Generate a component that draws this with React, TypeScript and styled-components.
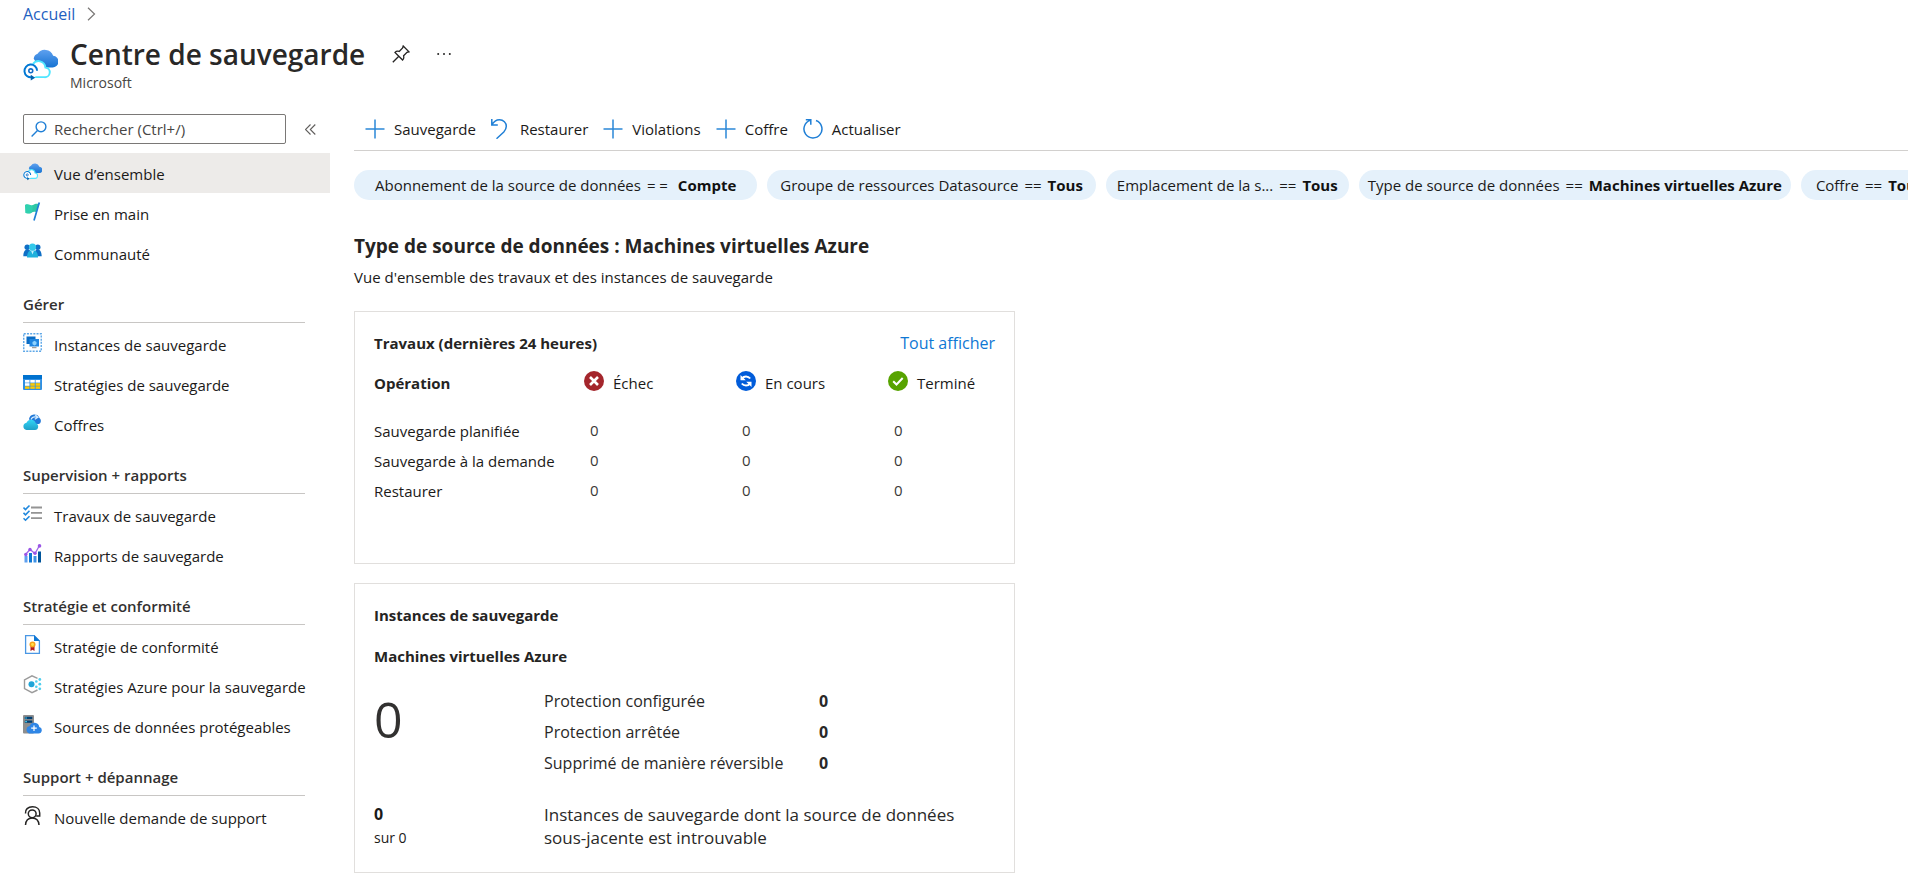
import React from 'react';
import styled, { createGlobalStyle } from 'styled-components';

const GlobalStyle = createGlobalStyle`
  *, *::before, *::after { box-sizing: border-box; }
  body {
    margin: 0;
    background: #fff;
    color: #1b1a19;
    font-family: "Segoe UI", "Open Sans", "Noto Sans", sans-serif;
    font-size: 15px;
    line-height: 20px;
  }
  h1, h2, h3, p, ul, dl, dd { margin: 0; padding: 0; }
  ul { list-style: none; }
  a { color: inherit; text-decoration: none; }
  button, input { font: inherit; color: inherit; }
  button { background: none; border: 0; padding: 0; cursor: pointer; }
  svg { display: block; flex: none; }
`;

/* ---------- Layout ---------- */

const Page = styled.div`
  min-width: 1040px;
  overflow-x: hidden;
`;

const Breadcrumb = styled.nav`
  display: flex;
  align-items: center;
  gap: 12px;
  height: 28px;
  padding-left: 23px;
  font-size: 16px;
  color: #1f5fbf;
`;

const Header = styled.header`
  display: flex;
  align-items: center;
  gap: 12px;
  height: 84px;
  padding: 0 23px 12px;
`;

const TitleRow = styled.div`
  display: flex;
  align-items: center;
  gap: 27px;
`;

const Title = styled.h1`
  font-size: 28px;
  font-weight: 600;
  line-height: 38px;
  color: #292827;
`;

const Subtitle = styled.p`
  font-size: 14px;
  color: #484644;
`;

const Body = styled.div`
  display: flex;
  align-items: flex-start;
`;

/* ---------- Sidebar ---------- */

const Sidebar = styled.aside`
  flex: none;
  width: 330px;
  padding-top: 2px;
`;

const SearchRow = styled.div`
  display: flex;
  align-items: center;
  gap: 19px;
  margin-bottom: 9px;
  padding-left: 23px;
`;

const SearchBox = styled.label`
  display: flex;
  align-items: center;
  gap: 7px;
  width: 263px;
  height: 30px;
  padding: 0 7px;
  border: 1px solid #7a7876;
  border-radius: 2px;
`;

const SearchInput = styled.input`
  flex: 1;
  min-width: 0;
  padding: 0;
  border: 0;
  outline: 0;
  background: none;
  &::placeholder { color: #484644; opacity: 1; }
`;

const NavLink = styled.a<{ $active?: boolean }>`
  display: flex;
  align-items: center;
  gap: 12px;
  height: 40px;
  padding: 2px 0 0 23px;
  white-space: nowrap;
  background: ${p => (p.$active ? '#edebe9' : 'transparent')};

  svg { margin-bottom: 6px; }
`;

const NavHeading = styled.h2`
  height: 43px;
  margin: 7px 25px 1px 23px;
  padding-top: 14px;
  border-bottom: 1px solid #c8c6c4;
  font-size: 15px;
  font-weight: 600;
  line-height: 20px;
  color: #323130;
`;

/* ---------- Main ---------- */

const Main = styled.main`
  flex: 1;
  min-width: 0;
  padding-left: 24px;
`;

const Toolbar = styled.div`
  display: flex;
  align-items: center;
  gap: 15px;
  height: 39px;
  padding: 0 11px 4px;
  border-bottom: 1px solid #d2d0ce;
`;

const ToolButton = styled.button`
  display: flex;
  align-items: center;
  gap: 9px;
  white-space: nowrap;
`;

const Chips = styled.div`
  display: flex;
  gap: 10px;
  padding-top: 19px;
  overflow: hidden;
`;

const Chip = styled.button<{ $pad: number }>`
  flex: none;
  height: 30px;
  padding: 0 ${p => p.$pad}px;
  border-radius: 15px;
  background: #e5f1fb;
  white-space: pre;

  strong { font-weight: 700; color: #111; }
`;

const Operator = styled.span`
  padding: 0 6px;
`;

const Heading = styled.h2`
  margin-top: 33px;
  font-size: 19px;
  font-weight: 700;
  line-height: 26px;
  color: #252423;
`;

const Lead = styled.p`
  margin-top: 8px;
`;

const Card = styled.section`
  max-width: 661px;
  margin-top: 19px;
  padding: 19px 19px 23px;
  border: 1px solid #e1dfdd;
`;

const JobsCard = styled(Card)`
  margin-top: 24px;
  padding-bottom: 57px;
`;

const CardHead = styled.div`
  display: flex;
  justify-content: space-between;
  align-items: center;
  line-height: 24px;
`;

const CardTitle = styled.h3`
  font-size: 15px;
  font-weight: 700;
  line-height: 24px;
  color: #252423;
`;

const CardLink = styled.a`
  font-size: 16px;
  color: #0f78d4;
`;

const JobsTable = styled.table`
  width: 100%;
  margin-top: 10px;
  border-collapse: collapse;
  table-layout: fixed;

  th, td {
    height: 30px;
    padding: 0;
    font-weight: 400;
    text-align: left;
    white-space: nowrap;
  }
  thead th { width: 152px; height: 51px; padding-bottom: 16px; }
  thead th:first-child { width: 210px; font-weight: 700; color: #252423; }
  thead th:last-child { width: auto; }
  td { padding: 0 0 3px 6px; color: #3b3a39; }
`;

const Status = styled.span`
  display: flex;
  align-items: center;
  gap: 9px;

  svg { margin-bottom: 3px; }
`;

const SubHeading = styled(CardTitle)`
  margin-top: 17px;
`;

const Split = styled.div<{ $gap: number }>`
  display: grid;
  grid-template-columns: 170px 1fr;
  margin-top: ${p => p.$gap}px;
  font-size: 16px;
  line-height: 23px;
`;

const BigNumber = styled.p`
  font-size: 50px;
  line-height: 66px;
  color: #323130;
`;

const Details = styled.dl`
  display: grid;
  grid-template-columns: 275px auto;
  justify-content: start;
  line-height: 31px;
  color: #292827;

  dd { font-weight: 700; }
`;

const Small = styled.p`
  font-size: 14px;
`;

const Note = styled.p`
  max-width: 420px;
  font-size: 17px;
  color: #292827;
`;

/* ---------- Icons ---------- */

const BackupCenterIcon = ({ size, id }: { size: number; id: string }) => (
  <svg width={size} height={size} viewBox="0 0 36 36" aria-hidden="true">
    <defs>
      <linearGradient id={id} x1="0" y1="0" x2="0" y2="1">
        <stop offset="0" stopColor="#5ea0ef" />
        <stop offset="1" stopColor="#1673d2" />
      </linearGradient>
    </defs>
    <path d="M11 12a6 6 0 0 1 4-5A9 9 0 0 1 31 9a6 6 0 0 1-1 12H17z" fill={`url(#${id})`} />
    <path d="M8 31h14a5 5 0 0 0 1-10 7 7 0 0 0-13-3 6.500 6.500 0 0 0-2 13z" fill="#fff" stroke="#50e6ff" strokeWidth="2" />
    <circle cx="8" cy="24.500" r="7.500" fill="#fff" />
    <path d="M9 31a6.500 6.500 0 1 1 5.500-6.500" fill="none" stroke="#0078d4" strokeWidth="2" />
    <circle cx="8" cy="24.500" r="2" fill="#fff" stroke="#0f6cc9" strokeWidth="1.600" />
    <path d="M8 28.500l4.500 3L8 34.500z" fill="#0062ad" />
  </svg>
);

const FlagIcon = () => (
  <svg width="19" height="19" viewBox="0 0 19 19" aria-hidden="true">
    <path d="M2 3c3-2 5 1.500 8 0 2-1 3-1.500 6-1l-3 8c-4-1-4 1.500-6.500 1.500S3 11 2.500 11z" fill="#2fc7a5" />
    <path d="M2 3c3-2 5 1.500 8 0l-1 7.500c-2 1-4.500 1-6.500.5z" fill="#31d6b4" opacity=".7" />
    <path d="M16.300.5L11 18.500" stroke="#1f7fd6" strokeWidth="1.700" />
  </svg>
);

const CommunityIcon = () => (
  <svg width="19" height="19" viewBox="0 0 19 19" aria-hidden="true">
    <g fill="#0f6fc6">
      <circle cx="4.200" cy="5.300" r="2.700" />
      <circle cx="14.800" cy="5.300" r="2.700" />
      <path d="M.3 14.300C.5 10 1.500 7.500 4.500 7.500s3 2 3 6.800zM11.500 14.300c0-4.800 1-6.800 3-6.800 3 0 4 2.500 4.200 6.800z" />
    </g>
    <path d="M4 15.500c0-5 2-7.500 5.500-7.500S15 10.500 15 15.500z" fill="#1fb0dc" />
    <path d="M8 8.500h3l-1.500 4z" fill="#c3f1ff" />
    <circle cx="9.500" cy="5" r="3.600" fill="#32c8ea" />
  </svg>
);

const InstancesIcon = () => (
  <svg width="19" height="19" viewBox="0 0 19 19" aria-hidden="true">
    <rect x=".75" y=".75" width="17.500" height="17.500" fill="#fff" stroke="#5ea8e8" strokeWidth="1.400" strokeDasharray="2 1.200" />
    <rect x="3.500" y="3.500" width="9" height="7.500" fill="#0a6cc4" />
    <rect x="6.500" y="6" width="9.500" height="7.500" fill="#2186e0" />
    <path d="M9.500 9l2-1.200 2 1.200v2.200l-2 1.200-2-1.200z" fill="#8fd3ff" />
    <path d="M9 14.700h4.500" stroke="#8a8886" />
  </svg>
);

const PoliciesIcon = () => (
  <svg width="19" height="19" viewBox="0 0 19 19" aria-hidden="true">
    <rect x="0" y="2" width="19" height="15" rx="1" fill="#2f8fe4" />
    <rect x="0" y="2" width="19" height="4" fill="#0072cf" />
    <g fill="#fff">
      <rect x="2" y="7" width="4.500" height="2.600" />
      <rect x="7.300" y="7" width="4.500" height="2.600" />
      <rect x="12.600" y="7" width="4.500" height="2.600" />
      <rect x="2" y="10.200" width="4.500" height="2.600" />
    </g>
    <g fill="#ffca00">
      <rect x="7.300" y="10.200" width="4.500" height="2.600" />
      <rect x="12.600" y="10.200" width="4.500" height="2.600" />
      <rect x="2" y="13.400" width="4.500" height="2.400" />
      <rect x="7.300" y="13.400" width="4.500" height="2.400" />
      <rect x="12.600" y="13.400" width="4.500" height="2.400" />
    </g>
  </svg>
);

const VaultsIcon = () => (
  <svg width="19" height="19" viewBox="0 0 19 19" aria-hidden="true">
    <defs>
      <linearGradient id="vault" x1="0" y1="0" x2="0" y2="1">
        <stop offset="0" stopColor="#32d4f5" />
        <stop offset="1" stopColor="#1fa0c8" />
      </linearGradient>
    </defs>
    <path d="M6 6a5.500 5.500 0 0 1 10.500-1A3.600 3.600 0 0 1 16 11H9z" fill="#2078d8" />
    <path d="M8 6.500c1-2.500 3.500-3 6-2.300m-2-2.400l3 2.500-3.200 2" fill="none" stroke="#d3ebff" strokeWidth="1.200" />
    <path d="M3.500 17h8.500a3.500 3.500 0 0 0 .8-6.800A5 5 0 0 0 3.500 9.700a3.700 3.700 0 0 0 0 7.300z" fill="url(#vault)" />
  </svg>
);

const JobsIcon = () => (
  <svg width="19" height="19" viewBox="0 0 19 19" fill="none" aria-hidden="true">
    <path d="M8 3.500h11M8 8.800h11M8 14.200h11" stroke="#949494" strokeWidth="1.800" />
    <path d="M.5 3.500l2 2L6.500 1.500M.5 8.800l2 2 4-4M.5 14.200l2 2 4-4" stroke="#2088dd" strokeWidth="1.600" />
  </svg>
);

const ReportsIcon = () => (
  <svg width="19" height="19" viewBox="0 0 19 19" aria-hidden="true">
    <rect x="1.500" y="12" width="3" height="6.500" fill="#5ea0ef" />
    <rect x="6" y="9" width="3" height="9.500" fill="#0f78d4" />
    <rect x="10.500" y="12" width="3" height="6.500" fill="#3c91e6" />
    <rect x="15" y="7.500" width="3" height="11" fill="#00559b" />
    <path d="M2.500 10.500L7 5.500l5 4 4.500-8" fill="none" stroke="#a067e8" strokeWidth="1.300" />
    <g fill="#9a55e6">
      <circle cx="2.800" cy="10.500" r="1.700" />
      <circle cx="7" cy="5.500" r="1.700" />
      <circle cx="12" cy="9.300" r="1.700" />
      <circle cx="16.500" cy="1.900" r="1.800" />
    </g>
  </svg>
);

const ComplianceIcon = () => (
  <svg width="19" height="19" viewBox="0 0 19 19" aria-hidden="true">
    <path d="M2.600.7h8.600l5.200 5.200v12.400H2.600z" fill="#fff" stroke="#4a97e4" strokeWidth="1.300" />
    <path d="M11 0l6 6h-6z" fill="#0f78d4" />
    <path d="M7.500 11h4v5l-2-1.200-2 1.200z" fill="#b3191f" />
    <circle cx="9.500" cy="9.500" r="3" fill="#f9a11b" />
    <circle cx="9.500" cy="9.500" r="1.400" fill="#ffe14d" />
  </svg>
);

const AzurePolicyIcon = () => (
  <svg width="19" height="19" viewBox="0 0 19 19" aria-hidden="true">
    <path d="M14.500 3.300L9 .9 1.500 5v8.500L9 17.600l5.500-2.600" fill="none" stroke="#9b9b9b" strokeWidth="1.400" />
    <circle cx="8.500" cy="9.200" r="3" fill="#1fa5d8" />
    <g fill="#50cfee">
      <circle cx="13.300" cy="6.500" r="1.300" />
      <circle cx="13.300" cy="11.800" r="1.300" />
      <circle cx="16.800" cy="4.500" r="1.400" />
      <circle cx="16.800" cy="9.200" r="1.400" />
      <circle cx="16.800" cy="13.800" r="1.400" />
    </g>
  </svg>
);

const DatasourcesIcon = () => (
  <svg width="19" height="19" viewBox="0 0 19 19" aria-hidden="true">
    <rect x="0" y="0" width="11" height="18.500" rx="1" fill="#8e8e8e" />
    <rect x="1.800" y="1.800" width="7.500" height="2.300" fill="#003f73" />
    <rect x="1.800" y="5.500" width="7.500" height="2.300" fill="#003f73" />
    <path d="M2.300 3h1.500M2.300 6.700h1.500" stroke="#50e6ff" strokeWidth="1.200" />
    <path d="M6 18.500h9.500a3.300 3.300 0 0 0 .8-6.500 5 5 0 0 0-9.600-1A3.900 3.900 0 0 0 6 18.500z" fill="#2f86e6" />
    <path d="M11 10.500v5.500M8.200 13.200h5.600" stroke="#fff" strokeWidth="1.200" />
  </svg>
);

const SupportIcon = () => (
  <svg width="19" height="19" viewBox="0 0 19 19" fill="none" stroke="#252423" strokeWidth="1.500" aria-hidden="true">
    <path d="M2.500 7.500C2 3.500 5 .8 9.500.8S16.700 3.500 16.700 7v3h-3.500" />
    <circle cx="9.200" cy="7.800" r="3.900" />
    <path d="M2.500 19c.3-4.500 3-7 6.700-7s6.500 2.500 6.800 7" />
  </svg>
);

const PinIcon = () => (
  <svg width="18" height="18" viewBox="0 0 18 18" fill="none" stroke="#252423" strokeWidth="1.300" aria-hidden="true">
    <path d="M11.200 1L17 6.800l-2 .6-3.400 3.400c.5 1.800.1 3.200-1 4.200L3 7.400c1-1.100 2.400-1.500 4.200-1L10.600 3zM6.800 11.200L.8 17.200" />
  </svg>
);

const MoreIcon = () => (
  <svg width="14" height="4" viewBox="0 0 14 4" fill="#252423" aria-hidden="true">
    <circle cx="1.200" cy="2" r="1" />
    <circle cx="7" cy="2" r="1" />
    <circle cx="12.800" cy="2" r="1" />
  </svg>
);

const ChevronIcon = () => (
  <svg width="9" height="14" viewBox="0 0 9 14" fill="none" stroke="#797775" strokeWidth="1.200" aria-hidden="true">
    <path d="M1 .8L7.500 7 1 13.200" />
  </svg>
);

const CollapseIcon = () => (
  <svg width="11" height="11" viewBox="0 0 11 11" fill="none" stroke="#605e5c" strokeWidth="1.100" aria-hidden="true">
    <path d="M5.500.5l-5 5 5 5M10.300.5l-5 5 5 5" />
  </svg>
);

const SearchIcon = () => (
  <svg width="16" height="16" viewBox="0 0 16 16" fill="none" stroke="#1f7fd6" strokeWidth="1.400" aria-hidden="true">
    <circle cx="10" cy="5.800" r="4.900" />
    <path d="M6.500 9.400L.6 15.400" />
  </svg>
);

const PlusIcon = () => (
  <svg width="20" height="20" viewBox="0 0 20 20" fill="none" stroke="#2b88d8" strokeWidth="1.500" aria-hidden="true">
    <path d="M10 .5v19M.5 10h19" />
  </svg>
);

const RestoreIcon = () => (
  <svg width="20" height="20" viewBox="0 0 20 20" fill="none" stroke="#1f7fd6" strokeWidth="1.500" aria-hidden="true">
    <path d="M.8 0v6h6M.8 6C3 2 6 .8 8.500.8c4 0 6.800 3 6.800 6.500 0 2.500-1 4-2.500 5.700L5.500 19.700" />
  </svg>
);

const RefreshIcon = () => (
  <svg width="20" height="20" viewBox="0 0 20 20" fill="none" stroke="#1f7fd6" strokeWidth="1.500" aria-hidden="true">
    <path d="M13 1.500a9 9 0 1 1-5.800-.1M2.800.8h5v5" />
  </svg>
);

const FailedIcon = () => (
  <svg width="20" height="20" viewBox="0 0 20 20" aria-hidden="true">
    <circle cx="10" cy="10" r="10" fill="#a4262c" />
    <path d="M6 6l8 8M14 6l-8 8" stroke="#fff" strokeWidth="2.600" />
  </svg>
);

const RunningIcon = () => (
  <svg width="20" height="20" viewBox="0 0 20 20" aria-hidden="true">
    <circle cx="10" cy="10" r="10" fill="#015cda" />
    <path d="M6 7.300C8 4.800 12 4.700 14.200 7.500M14 12.700c-2 2.500-6 2.600-8.200-.2" fill="none" stroke="#fff" strokeWidth="2" />
    <path d="M4.500 4v5.300h5.300zM15.500 16v-5.300h-5.300z" fill="#fff" />
  </svg>
);

const DoneIcon = () => (
  <svg width="20" height="20" viewBox="0 0 20 20" aria-hidden="true">
    <circle cx="10" cy="10" r="10" fill="#57a300" />
    <path d="M5.200 10.200l3.300 3.300 6.200-6.500" fill="none" stroke="#fff" strokeWidth="2" />
  </svg>
);

/* ---------- Data ---------- */

type NavItem = { label: string; icon: React.ReactNode; active?: boolean };
type NavGroup = { title?: string; items: NavItem[] };

const navGroups: NavGroup[] = [
  {
    items: [
      { label: 'Vue d’ensemble', icon: <BackupCenterIcon size={19} id="cloud-nav" />, active: true },
      { label: 'Prise en main', icon: <FlagIcon /> },
      { label: 'Communauté', icon: <CommunityIcon /> },
    ],
  },
  {
    title: 'Gérer',
    items: [
      { label: 'Instances de sauvegarde', icon: <InstancesIcon /> },
      { label: 'Stratégies de sauvegarde', icon: <PoliciesIcon /> },
      { label: 'Coffres', icon: <VaultsIcon /> },
    ],
  },
  {
    title: 'Supervision + rapports',
    items: [
      { label: 'Travaux de sauvegarde', icon: <JobsIcon /> },
      { label: 'Rapports de sauvegarde', icon: <ReportsIcon /> },
    ],
  },
  {
    title: 'Stratégie et conformité',
    items: [
      { label: 'Stratégie de conformité', icon: <ComplianceIcon /> },
      { label: 'Stratégies Azure pour la sauvegarde', icon: <AzurePolicyIcon /> },
      { label: 'Sources de données protégeables', icon: <DatasourcesIcon /> },
    ],
  },
  {
    title: 'Support + dépannage',
    items: [{ label: 'Nouvelle demande de support', icon: <SupportIcon /> }],
  },
];

const tools = [
  { label: 'Sauvegarde', icon: <PlusIcon /> },
  { label: 'Restaurer', icon: <RestoreIcon /> },
  { label: 'Violations', icon: <PlusIcon /> },
  { label: 'Coffre', icon: <PlusIcon /> },
  { label: 'Actualiser', icon: <RefreshIcon /> },
];

const filters = [
  { label: 'Abonnement de la source de données', op: '= = ', value: 'Compte', pad: 21 },
  { label: 'Groupe de ressources Datasource', op: '==', value: 'Tous', pad: 13 },
  { label: 'Emplacement de la s...', op: '==', value: 'Tous', pad: 11 },
  { label: 'Type de source de données', op: '==', value: 'Machines virtuelles Azure', pad: 9 },
  { label: 'Coffre', op: '==', value: 'Tous', pad: 15 },
];

const operations = ['Sauvegarde planifiée', 'Sauvegarde à la demande', 'Restaurer'];
const protection = ['Protection configurée', 'Protection arrêtée', 'Supprimé de manière réversible'];

/* ---------- App ---------- */

export default function App() {
  return (
    <Page>
      <GlobalStyle />
      <Breadcrumb aria-label="Fil d’Ariane">
        <a href="#accueil">Accueil</a>
        <ChevronIcon />
      </Breadcrumb>
      <Header>
        <BackupCenterIcon size={35} id="cloud-title" />
        <div>
          <TitleRow>
            <Title>Centre de sauvegarde</Title>
            <button type="button" aria-label="Épingler"><PinIcon /></button>
            <button type="button" aria-label="Plus"><MoreIcon /></button>
          </TitleRow>
          <Subtitle>Microsoft</Subtitle>
        </div>
      </Header>
      <Body>
        <Sidebar>
          <SearchRow>
            <SearchBox>
              <SearchIcon />
              <SearchInput type="text" aria-label="Rechercher" placeholder="Rechercher (Ctrl+/)" />
            </SearchBox>
            <button type="button" aria-label="Réduire le menu"><CollapseIcon /></button>
          </SearchRow>
          <nav>
            {navGroups.map((group, i) => (
              <div key={i}>
                {group.title && <NavHeading>{group.title}</NavHeading>}
                <ul>
                  {group.items.map(item => (
                    <li key={item.label}>
                      <NavLink href="#" $active={item.active}>
                        {item.icon}
                        {item.label}
                      </NavLink>
                    </li>
                  ))}
                </ul>
              </div>
            ))}
          </nav>
        </Sidebar>
        <Main>
          <Toolbar role="toolbar">
            {tools.map(tool => (
              <ToolButton key={tool.label} type="button">
                {tool.icon}
                {tool.label}
              </ToolButton>
            ))}
          </Toolbar>
          <Chips>
            {filters.map(f => (
              <Chip key={f.label} type="button" $pad={f.pad}>
                {f.label}
                <Operator>{f.op}</Operator>
                <strong>{f.value}</strong>
              </Chip>
            ))}
          </Chips>
          <Heading>Type de source de données : Machines virtuelles Azure</Heading>
          <Lead>Vue d'ensemble des travaux et des instances de sauvegarde</Lead>

          <JobsCard>
            <CardHead>
              <CardTitle>Travaux (dernières 24 heures)</CardTitle>
              <CardLink href="#travaux">Tout afficher</CardLink>
            </CardHead>
            <JobsTable>
              <thead>
                <tr>
                  <th scope="col">Opération</th>
                  <th scope="col"><Status><FailedIcon />Échec</Status></th>
                  <th scope="col"><Status><RunningIcon />En cours</Status></th>
                  <th scope="col"><Status><DoneIcon />Terminé</Status></th>
                </tr>
              </thead>
              <tbody>
                {operations.map(op => (
                  <tr key={op}>
                    <th scope="row">{op}</th>
                    <td>0</td>
                    <td>0</td>
                    <td>0</td>
                  </tr>
                ))}
              </tbody>
            </JobsTable>
          </JobsCard>

          <Card>
            <CardTitle>Instances de sauvegarde</CardTitle>
            <SubHeading>Machines virtuelles Azure</SubHeading>
            <Split $gap={18}>
              <BigNumber>0</BigNumber>
              <Details>
                {protection.map(label => (
                  <React.Fragment key={label}>
                    <dt>{label}</dt>
                    <dd>0</dd>
                  </React.Fragment>
                ))}
              </Details>
            </Split>
            <Split $gap={24}>
              <div>
                <strong>0</strong>
                <Small>sur 0</Small>
              </div>
              <Note>Instances de sauvegarde dont la source de données sous-jacente est introuvable</Note>
            </Split>
          </Card>
        </Main>
      </Body>
    </Page>
  );
}
